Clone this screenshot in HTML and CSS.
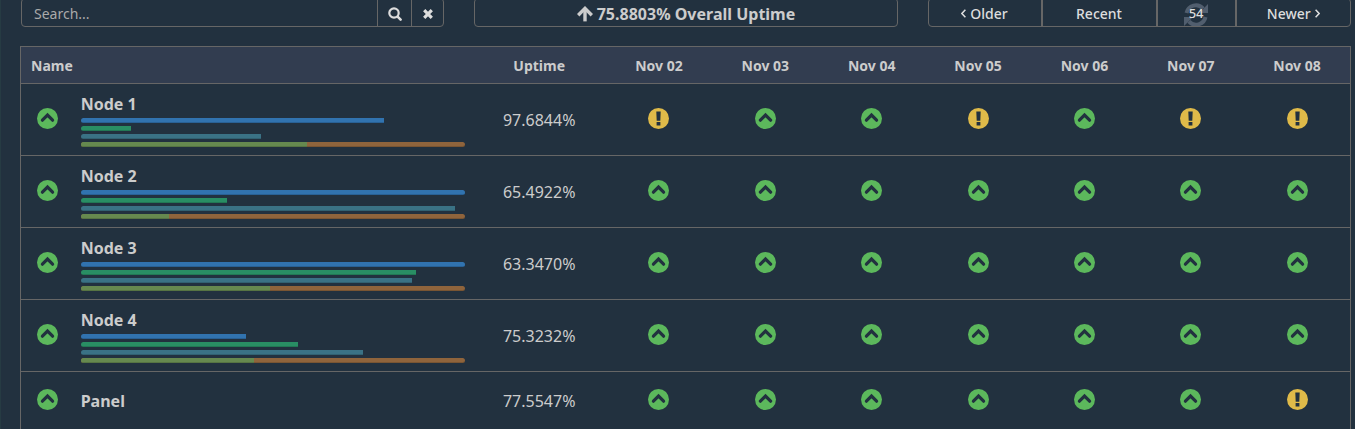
FILE: index.html
```html
<!DOCTYPE html>
<html lang="en">
<head>
<meta charset="utf-8">
<title>Uptime</title>
<link rel="stylesheet" href="styles.css">
</head>
<body>
<svg class="defs" aria-hidden="true">
  <symbol id="up" viewBox="0 0 21 21"><circle cx="10.5" cy="10.5" r="10.5" fill="#5cb85c"/><path d="M5.4 12.2 10.5 7.1l5.1 5.1" fill="none" stroke="#22313f" stroke-width="3.2" stroke-linecap="round"/></symbol>
  <symbol id="warn" viewBox="0 0 21 21"><circle cx="10.5" cy="10.5" r="10.5" fill="#dfba49"/><path d="M8.3 3.6h4.4l-.4 9.2H8.7zM8.6 14h3.8v3.4H8.6z" fill="#22313f"/></symbol>
</svg>
<main class="page">
  <header class="toolbar">
    <form class="group search" role="search">
      <input class="search-input" type="text" placeholder="Search..." aria-label="Search">
      <button class="icon-button" type="button" aria-label="Search"><svg width="14" height="14" viewBox="0 0 14 14" fill="none" stroke="currentColor"><circle cx="6" cy="6" r="4.7" stroke-width="2.2"/><path d="m9.6 9.6 3 3" stroke-width="2.6" stroke-linecap="round"/></svg></button>
      <button class="icon-button clear" type="button" aria-label="Clear"><svg width="10" height="10" viewBox="0 0 10 10" fill="none" stroke="currentColor" stroke-width="3.2"><path d="m1.2 1.2 7.6 7.6M8.8 1.2 1.2 8.8"/></svg></button>
    </form>
    <div class="group overall">
      <svg width="16" height="16" viewBox="0 0 16 16" fill="none" stroke="currentColor" stroke-width="3.4"><path d="M8 15.4V3" stroke-width="3.4"/><path d="M1.2 9.2 8 2.4l6.8 6.8"/></svg>
      <span>75.8803% Overall Uptime</span>
    </div>
    <nav class="group pager" aria-label="Date range">
      <button class="page-button" type="button"><svg width="5" height="9" viewBox="0 0 5 9" fill="none" stroke="currentColor" stroke-width="1.5"><path d="M4.4.8.9 4.5l3.5 3.7"/></svg>Older</button>
      <button class="page-button" type="button">Recent</button>
      <button class="page-button refresh" type="button" aria-label="Refresh, 54 seconds left">
        <svg class="spinner" width="24" height="24" viewBox="0 0 24 24" fill="none" stroke="#515e6e" stroke-width="4"><path d="M2.5 10a9.6 9.6 0 0 1 16.6-4.4M21.5 14A9.6 9.6 0 0 1 4.9 18.4"/><path d="M24 1v9h-9zM0 23v-9h9z" fill="#515e6e" stroke="none"/></svg>
        <span class="count">54</span>
      </button>
      <button class="page-button newer" type="button">Newer<svg width="5" height="9" viewBox="0 0 5 9" fill="none" stroke="currentColor" stroke-width="1.5"><path d="M.6.8l3.5 3.7L.6 8.2"/></svg></button>
    </nav>
  </header>
  <table class="nodes">
    <colgroup><col class="col-state"><col class="col-name"><col class="col-uptime"><col span="7" class="col-day"></colgroup>
    <thead>
      <tr><th class="name-head" colspan="2" scope="col">Name</th><th scope="col">Uptime</th><th scope="col">Nov 02</th><th scope="col">Nov 03</th><th scope="col">Nov 04</th><th scope="col">Nov 05</th><th scope="col">Nov 06</th><th scope="col">Nov 07</th><th scope="col">Nov 08</th></tr>
    </thead>
    <tbody id="rows"></tbody>
  </table>
</main>
<script src="app.js"></script>
</body>
</html>
```
FILE: styles.css
```css
* {
  box-sizing: border-box;
}

body {
  margin: 0;
  overflow: hidden;
  border-left: 1px solid #263b43;
  background: #22313f;
  color: #ccc;
  font-family: "Noto Sans", "Open Sans", sans-serif;
  font-size: 14px;
}

.defs {
  position: absolute;
  width: 0;
  height: 0;
}

.page {
  padding: 0 4px 0 19px;
}

/* The toolbar tucks under the top edge of the window. */
.toolbar {
  display: grid;
  grid-template-columns: repeat(3, 1fr);
  gap: 30px;
  margin: -2px 0 19px;
  padding-left: 1px;
}

.group {
  display: flex;
  height: 29px;
  border: 1px solid #666;
  border-radius: 4px;
  overflow: hidden;
}

.search-input,
.icon-button,
.page-button {
  margin: 0;
  padding: 0;
  border: 0;
  background: transparent;
  color: inherit;
  font: inherit;
}

.search-input {
  flex: 1;
  min-width: 0;
  padding: 2px 12px 0;
}

.search-input::placeholder {
  color: #aaa;
  opacity: 1;
}

.icon-button {
  display: flex;
  align-items: center;
  justify-content: center;
  width: 34px;
  padding-top: 2px;
  border-left: 1px solid #666;
  color: #ddd;
}

.clear {
  width: 32px;
}

.overall {
  align-items: center;
  justify-content: center;
  gap: 4px;
  padding-top: 2px;
  font-size: 16px;
  font-weight: 700;
}

.pager {
  display: grid;
  grid-template-columns: 113fr 115fr 80fr 115fr;
}

.page-button {
  display: flex;
  align-items: center;
  justify-content: center;
  gap: 4px;
  padding-right: 1px;
  border-left: 2px solid #666;
  color: #ddd;
  font-weight: 500;
}

.page-button:first-child {
  border-left: 0;
}

.refresh {
  display: grid;
  place-items: center;
  place-content: center;
}

.spinner,
.count {
  grid-area: 1 / 1;
}

.spinner {
  margin-top: 4px;
}

.count {
  font-size: 13px;
}

.nodes {
  width: 100%;
  table-layout: fixed;
  border-collapse: collapse;
  border: 1px solid #666;
  text-align: center;
}

.col-state {
  width: 4%;
}

.col-name {
  width: 30%;
}

.col-uptime {
  width: 10%;
}

.col-day {
  width: 8%;
}

th {
  height: 37px;
  padding: 0 8px;
  border-bottom: 1px solid #666;
  background: #323d50;
  font-size: 14px;
  font-weight: 700;
}

.name-head {
  padding-left: 10px;
  text-align: left;
}

td {
  height: 58px;
  padding: 8px;
  border-top: 1px solid #666;
  vertical-align: middle;
}

.icon {
  display: block;
  width: 21px;
  height: 21px;
  margin: 0 auto 2px;
}

.name {
  padding-left: 7px;
  text-align: left;
}

.title {
  font-size: 16px;
  font-weight: 700;
  line-height: 24px;
}

.uptime {
  font-size: 16px;
}

.bars {
  display: grid;
  gap: 3px;
  margin-top: 2px;
}

.bar {
  height: 5px;
  border-radius: 3px;
  overflow: hidden;
}

.fill {
  height: 100%;
  box-shadow: inset 0 -1px rgba(0, 0, 0, 0.15);
}

.cpu {
  background: #3173af;
}

.memory {
  background: #298e64;
}

.disk {
  background: #3a7285;
}

.traffic {
  background: #66894f;
}

.split {
  background: #8f643c;
  box-shadow: inset 0 -1px rgba(0, 0, 0, 0.15);
}
```
FILE: app.js
```js
const nodes = [
  { name: "Node 1", uptime: "97.6844%", bars: [79, 13, 47, 59], days: "wuuwuww" },
  { name: "Node 2", uptime: "65.4922%", bars: [100, 38.2, 97.6, 23], days: "uuuuuuu" },
  { name: "Node 3", uptime: "63.3470%", bars: [100, 87.2, 86.2, 49.2], days: "uuuuuuu" },
  { name: "Node 4", uptime: "75.3232%", bars: [43, 56.5, 73.5, 45.1], days: "uuuuuuu" },
  { name: "Panel", uptime: "77.5547%", bars: [], days: "uuuuuuw" }
];
const kinds = ["cpu", "memory", "disk", "traffic"];

const icon = (state) => {
  const warn = state === "w";
  return `<svg class="icon" role="img" aria-label="${warn ? "Degraded" : "Up"}"><use href="#${warn ? "warn" : "up"}"/></svg>`;
};

const bars = (values) => values.length
  ? `<div class="bars">${values.map((v, i) =>
      `<div class="bar${i === 3 ? " split" : ""}"><div class="fill ${kinds[i]}" style="width:${v}%"></div></div>`).join("")}</div>`
  : "";

document.getElementById("rows").innerHTML = nodes.map((n) =>
  `<tr><td>${icon("u")}</td><td class="name"><div class="title">${n.name}</div>${bars(n.bars)}</td>` +
  `<td class="uptime">${n.uptime}</td>${[...n.days].map((d) => `<td>${icon(d)}</td>`).join("")}</tr>`).join("");
```
